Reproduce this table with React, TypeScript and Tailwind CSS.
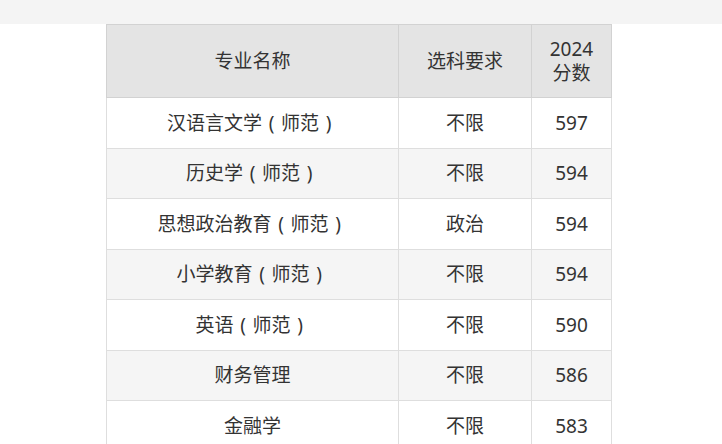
const rows = [
  { name: '汉语言文学（师范）', req: '不限', score: 597 },
  { name: '历史学（师范）', req: '不限', score: 594 },
  { name: '思想政治教育（师范）', req: '政治', score: 594 },
  { name: '小学教育（师范）', req: '不限', score: 594 },
  { name: '英语（师范）', req: '不限', score: 590 },
  { name: '财务管理', req: '不限', score: 586 },
  { name: '金融学', req: '不限', score: 583 },
  { name: '会计学', req: '不限', score: 582 },
];

// full-width parens sit centred in their box in the reference
function Name({ text }: { text: string }) {
  const parts = text.split(/([（）])/);
  return (
    <>
      {parts.map((p, i) =>
        p === '（' || p === '）' ? (
          <span key={i} className="inline-block w-[1em] text-center">
            {p === '（' ? '(' : ')'}
          </span>
        ) : (
          <span key={i}>{p}</span>
        ),
      )}
    </>
  );
}

export default function App() {
  return (
    <div
      className="min-h-screen w-full bg-white text-[#333]"
      style={{ fontFamily: '"Noto Sans", "Noto Sans CJK SC", sans-serif' }}
    >
      <div className="h-6 w-full bg-[#f4f4f4]" />
      <div className="pl-[106px]">
        <table className="w-[505px] table-fixed border-collapse text-[19px]">
          <colgroup>
            <col className="w-[292px]" />
            <col className="w-[133px]" />
            <col className="w-[80px]" />
          </colgroup>
          <thead>
            <tr className="h-[73px] bg-[#e4e4e4]">
              <th className="border border-[#d2d2d2] text-center font-normal">专业名称</th>
              <th className="border border-[#d2d2d2] text-center font-normal">选科要求</th>
              <th className="border border-[#d2d2d2] text-center font-normal leading-[24px]">
                2024
                <br />
                分数
              </th>
            </tr>
          </thead>
          <tbody>
            {rows.map((r, i) => (
              <tr key={i} className={`h-[50.5px] ${i % 2 === 1 ? 'bg-[#f5f5f5]' : 'bg-white'}`}>
                <td className="border border-[#dedede] text-center">
                  <Name text={r.name} />
                </td>
                <td className="border border-[#dedede] text-center">{r.req}</td>
                <td className="border border-[#dedede] text-center">{r.score}</td>
              </tr>
            ))}
          </tbody>
        </table>
      </div>
    </div>
  );
}
